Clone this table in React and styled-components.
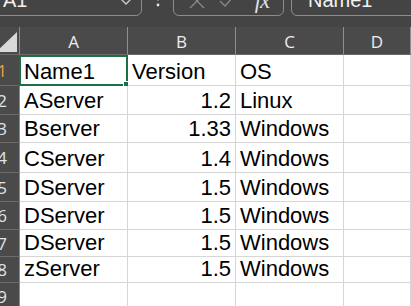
import React from "react";
import styled, { createGlobalStyle } from "styled-components";

const GlobalStyle = createGlobalStyle`
  html, body { margin: 0; padding: 0; background: #444444; }
  body { width: 411px; height: 306px; overflow: hidden; }
`;

const Window = styled.div`
  width: 411px;
  height: 306px;
  overflow: hidden;
  display: flex;
  flex-direction: column;
  background: #444444;
`;

const FormulaBar = styled.div`
  height: 27px;
  flex: none;
  display: flex;
  align-items: flex-start;
  overflow: hidden;
  background: #444444;
`;

const Box = styled.div`
  margin-top: -14px;
  height: 30px;
  box-sizing: border-box;
  border: 1px solid #8c8c8c;
  border-radius: 6px;
  display: flex;
  align-items: center;
  flex: none;
  width: ${(p) => p.$width}px;
  margin-left: ${(p) => p.$ml || 0}px;
  padding-left: ${(p) => p.$pl || 0}px;
  color: #f2f2f2;
  font: 20px "Liberation Sans", Arial, sans-serif;
`;

const BoxText = styled.span`
  flex: 1;
  white-space: nowrap;
  line-height: 30px;
  transform: translateY(-1px);
`;

const Separator = styled.div`
  width: 31px;
  flex: none;
  display: flex;
  justify-content: center;
  margin-top: -10px;
`;

const ToolIcon = styled.span`
  display: flex;
  align-items: center;
  justify-content: center;
  width: ${(p) => p.$w}px;
  color: ${(p) => p.$color};
`;

const FxLabel = styled.span`
  font: italic 23px "Liberation Serif", "DejaVu Serif", serif;
  line-height: 30px;
  letter-spacing: -1px;
`;

const Grid = styled.div`
  display: grid;
  grid-template-columns: 20px 108px 108px 108px 67px;
  grid-template-rows: 28px 31px 29px 28px 30px 29px 28px 27px 26px 28px;
  flex: none;
`;

const Corner = styled.div`
  background: #4a4a4a;
  border-right: 1px solid #8a8a8a;
  border-bottom: 1px solid #6a6a6a;
  box-sizing: border-box;
  overflow: hidden;
`;

const ColHeader = styled.div`
  background: #4a4a4a;
  border-right: 1px solid #8e8e8e;
  border-bottom: 1px solid #6a6a6a;
  box-sizing: border-box;
  display: flex;
  align-items: center;
  justify-content: center;
  color: #eeeeee;
  font: 17px "Open Sans", "Noto Sans", sans-serif;
  padding-top: 1px;
`;

const RowHeader = styled.div`
  background: #4a4a4a;
  border-right: 1px solid #8a8a8a;
  border-bottom: 1px solid #6c6c6c;
  box-sizing: border-box;
  display: flex;
  align-items: center;
  justify-content: flex-end;
  padding-right: 12px;
  overflow: hidden;
  white-space: nowrap;
  color: ${(p) => (p.$active ? "#e7a43c" : "#dfe5ee")};
  font: 17px "Open Sans", "Noto Sans", sans-serif;
`;

const Cell = styled.div`
  position: relative;
  background: #ffffff;
  border-right: 1px solid #d6d6d6;
  border-bottom: 1px solid #d6d6d6;
  box-sizing: border-box;
  display: flex;
  align-items: flex-end;
  justify-content: ${(p) => (p.$right ? "flex-end" : "flex-start")};
  padding: 0 4px 2px 4px;
  font: 22px "Liberation Sans", Arial, sans-serif;
  line-height: 22px;
  color: #000000;
  white-space: nowrap;
`;

const Selection = styled.div`
  position: absolute;
  left: -1px;
  top: 0;
  right: -1px;
  bottom: -1px;
  border: 2px solid #1f6e43;
  pointer-events: none;
`;

const FillHandle = styled.div`
  position: absolute;
  right: -5px;
  bottom: -5px;
  width: 6px;
  height: 6px;
  background: #1f6e43;
  border: 1px solid #ffffff;
`;

const rows = [
  ["Name1", "Version", "OS"],
  ["AServer", "1.2", "Linux"],
  ["Bserver", "1.33", "Windows"],
  ["CServer", "1.4", "Windows"],
  ["DServer", "1.5", "Windows"],
  ["DServer", "1.5", "Windows"],
  ["DServer", "1.5", "Windows"],
  ["zServer", "1.5", "Windows"],
  ["", "", ""],
];

export default function App() {
  return (
    <>
      <GlobalStyle />
      <Window>
        <FormulaBar>
          <Box $width={150} $ml={-8} $pl={10}>
            <BoxText>A1</BoxText>
            <ToolIcon $w={30} $color="#cfcfcf">
              <svg width="14" height="10" viewBox="0 0 14 10">
                <path d="M2 3 L7 8 L12 3" fill="none" stroke="currentColor" strokeWidth="1.3" />
              </svg>
            </ToolIcon>
          </Box>
          <Separator>
            <svg width="4" height="18" viewBox="0 0 4 18">
              <circle cx="2" cy="3" r="1.4" fill="#e6e6e6" />
              <circle cx="2" cy="9" r="1.4" fill="#e6e6e6" />
              <circle cx="2" cy="15" r="1.4" fill="#e6e6e6" />
            </svg>
          </Separator>
          <Box $width={111} $pl={8}>
            <ToolIcon $w={30} $color="#8a8a8a">
              <svg width="18" height="18" viewBox="0 0 18 18">
                <path d="M2 2 L16 16 M16 2 L2 16" stroke="currentColor" strokeWidth="1.3" />
              </svg>
            </ToolIcon>
            <ToolIcon $w={30} $color="#8a8a8a">
              <svg width="18" height="18" viewBox="0 0 18 18">
                <path d="M2 9 L7 14 L16 4" fill="none" stroke="currentColor" strokeWidth="1.3" />
              </svg>
            </ToolIcon>
            <ToolIcon $w={40} $color="#e0e0e0">
              <FxLabel>fx</FxLabel>
            </ToolIcon>
          </Box>
          <Box $width={140} $ml={7} $pl={16}>
            <BoxText>Name1</BoxText>
          </Box>
        </FormulaBar>
        <Grid>
          <Corner>
            <svg width="19" height="27" viewBox="0 0 19 27">
              <polygon points="-4,25 17,25 17,5" fill="#d9d9d9" />
            </svg>
          </Corner>
          {["A", "B", "C", "D"].map((c) => (
            <ColHeader key={c}>{c}</ColHeader>
          ))}
          {rows.map((r, i) => (
            <React.Fragment key={i}>
              <RowHeader $active={i === 0}>{i + 1}</RowHeader>
              <Cell>
                {r[0]}
                {i === 0 && (
                  <Selection>
                    <FillHandle />
                  </Selection>
                )}
              </Cell>
              <Cell $right={i > 0}>{r[1]}</Cell>
              <Cell>{r[2]}</Cell>
              <Cell />
            </React.Fragment>
          ))}
        </Grid>
      </Window>
    </>
  );
}
